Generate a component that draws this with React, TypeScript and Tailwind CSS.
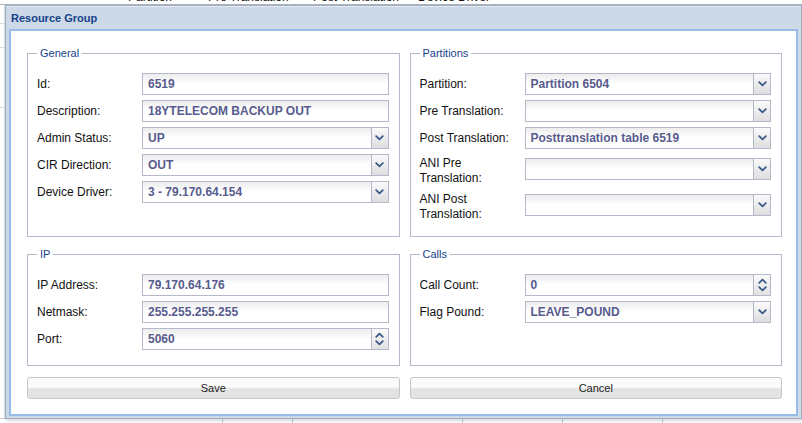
import React from 'react';

const Chevron = ({ up = false }: { up?: boolean }) => (
  <svg width="9" height="6" viewBox="0 0 9 6" className={up ? 'rotate-180' : ''}>
    <path d="M1.2 1.2 L4.5 4.4 L7.8 1.2" fill="none" stroke="#3a5a8c" strokeWidth="1.8" strokeLinecap="round" strokeLinejoin="round" />
  </svg>
);

type FieldProps = { value?: string; kind?: 'text' | 'select' | 'spin' };

const Field = ({ value = '', kind = 'text' }: FieldProps) => (
  <div className="flex-1 h-[22px] flex border border-[#b5b8c8] bg-gradient-to-b from-[#ececec] via-white to-white">
    <div className="flex-1 flex items-center pl-[5px] text-[12px] font-bold text-[#585b8e] overflow-hidden whitespace-nowrap">
      {value}
    </div>
    {kind === 'select' && (
      <div className="w-[17px] flex items-center justify-center border-l border-[#b5b8c8] bg-gradient-to-b from-[#fafafa] to-[#dedede]">
        <Chevron />
      </div>
    )}
    {kind === 'spin' && (
      <div className="w-[17px] flex flex-col items-center justify-center gap-[2px] border-l border-[#b5b8c8] bg-gradient-to-b from-[#fafafa] to-[#e2e2e2]">
        <Chevron up />
        <Chevron />
      </div>
    )}
  </div>
);

const Row = ({ label, value, kind }: { label: string; value?: string; kind?: 'text' | 'select' | 'spin' }) => (
  <div className="flex items-center h-[22px]">
    <div className="w-[105px] shrink-0 text-[12px] text-[#111]">{label}</div>
    <Field value={value} kind={kind} />
  </div>
);

const TallRow = ({ line1, line2 }: { line1: string; line2: string }) => (
  <div className="flex items-start h-[31px]">
    <div className="w-[105px] shrink-0 pt-[2px] text-[12px] leading-[15px] text-[#111]">
      {line1}
      <br />
      {line2}
    </div>
    <div className="flex-1 flex mt-[4px]">
      <Field kind="select" />
    </div>
  </div>
);

const Group = ({ title, children }: { title: string; children: React.ReactNode }) => (
  <fieldset className="border border-[#b5b8c8] pl-[9px] pr-[10px] pt-[13px] pb-[15px]">
    <legend className="px-[3px] text-[11px] leading-[13px] text-[#15428b]">{title}</legend>
    <div className="flex flex-col gap-[5px]">{children}</div>
  </fieldset>
);

const Button = ({ label }: { label: string }) => (
  <button className="h-[22px] rounded-[3px] border border-[#c6c6c6] bg-gradient-to-b from-[#fbfbfb] from-45% to-[#e3e3e3] to-55% text-[11px] text-[#222]">
    {label}
  </button>
);

export default function App() {
  return (
    <div className="relative w-[802px] h-[423px] overflow-hidden bg-white font-['Liberation_Sans',Arial,sans-serif]">
      {/* page behind the window */}
      <div className="flex flex-col h-full">
        <div className="h-[5px] flex border-b border-[#b0b6c0] text-[12px] leading-[12px] text-[#111] overflow-hidden">
          <div className="w-[120px]" />
          <div className="w-[85px] -mt-[9px] pl-[8px]">Partition</div>
          <div className="w-[105px] -mt-[9px] pl-[3px]">Pre Translation</div>
          <div className="w-[105px] -mt-[9px] pl-[3px]">Post Translation</div>
          <div className="w-[100px] -mt-[9px] pl-[3px]">Device Driver</div>
        </div>
        <div className="flex-1 flex">
          <div className="w-[5px] flex flex-col border-r border-[#dde3ea]">
            <div className="h-[19px] border-b border-[#d6dbe2]" />
            <div className="h-[24px] border-b border-[#d6dbe2]" />
            <div className="h-[60px] border-b border-[#d6dbe2]" />
          </div>
        </div>
        <div className="h-[5px] flex border-t border-[#c8ccd2]">
          <div className="w-[223px] border-r border-[#c8ccd2]" />
          <div className="w-[70px] border-r border-[#c8ccd2]" />
          <div className="w-[170px] border-r border-[#c8ccd2]" />
          <div className="w-[100px] border-r border-[#c8ccd2]" />
          <div className="w-[100px] border-r border-[#c8ccd2]" />
        </div>
      </div>

      {/* dialog window */}
      <div className="absolute left-[5px] top-[5px] w-[797px] h-[414px] flex flex-col border border-[#9fadc2] bg-[#cdd9e6] shadow-[1px_2px_3px_rgba(0,0,0,0.15)]">
        <div className="h-[23px] shrink-0 flex items-center pl-[5px] border-t border-[#e4ebf3] text-[11px] font-bold text-[#15428b]">
          Resource Group
        </div>
        <div className="flex-1 mx-[3px] mb-[2px] border-2 border-[#99bbe8] bg-white pl-[16px] pr-[14px] pt-[16px]">
          <div className="grid grid-cols-2 gap-x-[10px] gap-y-[11px]">
            <Group title="General">
              <Row label="Id:" value="6519" />
              <Row label="Description:" value="18YTELECOM BACKUP OUT" />
              <Row label="Admin Status:" value="UP" kind="select" />
              <Row label="CIR Direction:" value="OUT" kind="select" />
              <Row label="Device Driver:" value="3 - 79.170.64.154" kind="select" />
            </Group>
            <Group title="Partitions">
              <Row label="Partition:" value="Partition 6504" kind="select" />
              <Row label="Pre Translation:" kind="select" />
              <Row label="Post Translation:" value="Posttranslation table 6519" kind="select" />
              <TallRow line1="ANI Pre" line2="Translation:" />
              <TallRow line1="ANI Post" line2="Translation:" />
            </Group>
            <Group title="IP">
              <Row label="IP Address:" value="79.170.64.176" />
              <Row label="Netmask:" value="255.255.255.255" />
              <Row label="Port:" value="5060" kind="spin" />
            </Group>
            <Group title="Calls">
              <Row label="Call Count:" value="0" kind="spin" />
              <Row label="Flag Pound:" value="LEAVE_POUND" kind="select" />
            </Group>
            <Button label="Save" />
            <Button label="Cancel" />
          </div>
        </div>
      </div>
    </div>
  );
}
